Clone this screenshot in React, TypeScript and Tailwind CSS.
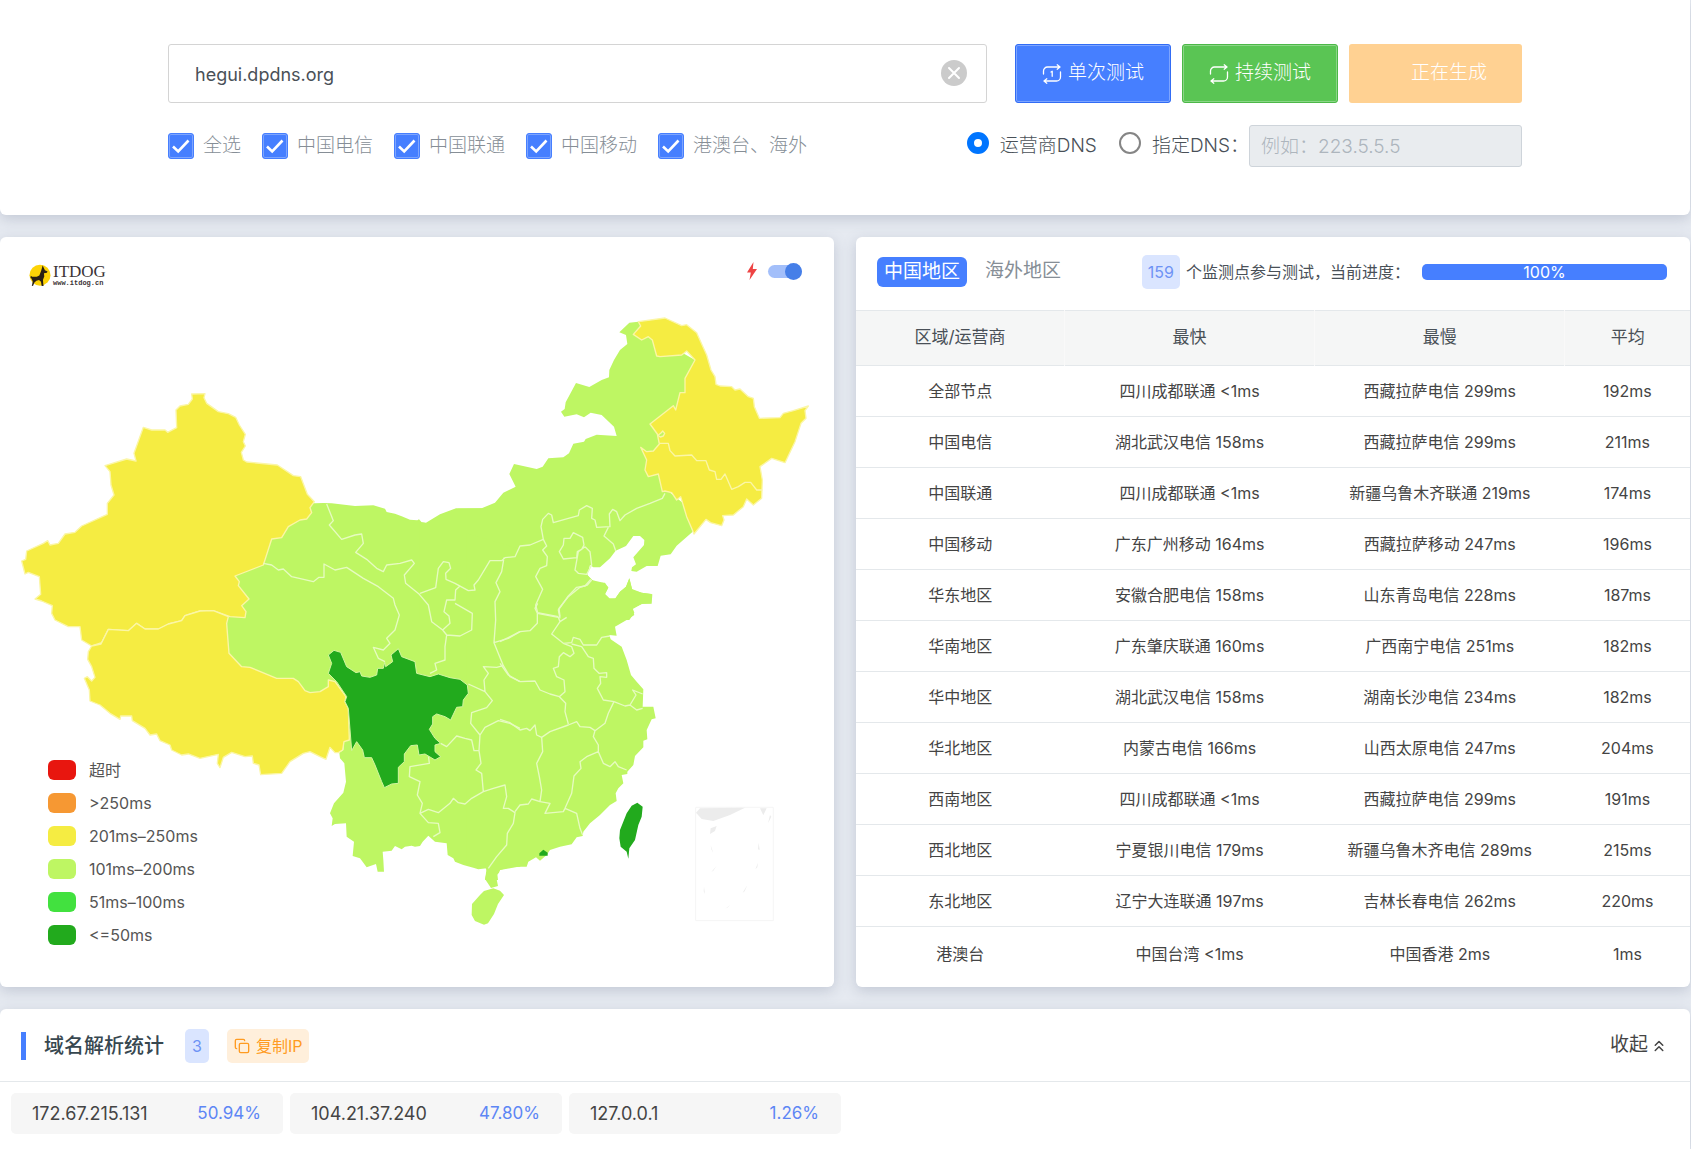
import { useState } from "react";
import { ChevronsUp, Copy } from "lucide-react";

const carriers = ["全选", "中国电信", "中国联通", "中国移动", "港澳台、海外"];

const legend = [
  { label: "超时", color: "bg-[#e8160f]" },
  { label: ">250ms", color: "bg-[#f69833]" },
  { label: "201ms–250ms", color: "bg-[#f5ec42]" },
  { label: "101ms–200ms", color: "bg-[#bef663]" },
  { label: "51ms–100ms", color: "bg-[#42e13f]" },
  { label: "<=50ms", color: "bg-[#22aa1d]" },
];

const rows = [
  ["全部节点", "四川成都联通 <1ms", "西藏拉萨电信 299ms", "192ms"],
  ["中国电信", "湖北武汉电信 158ms", "西藏拉萨电信 299ms", "211ms"],
  ["中国联通", "四川成都联通 <1ms", "新疆乌鲁木齐联通 219ms", "174ms"],
  ["中国移动", "广东广州移动 164ms", "西藏拉萨移动 247ms", "196ms"],
  ["华东地区", "安徽合肥电信 158ms", "山东青岛电信 228ms", "187ms"],
  ["华南地区", "广东肇庆联通 160ms", "广西南宁电信 251ms", "182ms"],
  ["华中地区", "湖北武汉电信 158ms", "湖南长沙电信 234ms", "182ms"],
  ["华北地区", "内蒙古电信 166ms", "山西太原电信 247ms", "204ms"],
  ["西南地区", "四川成都联通 <1ms", "西藏拉萨电信 299ms", "191ms"],
  ["西北地区", "宁夏银川电信 179ms", "新疆乌鲁木齐电信 289ms", "215ms"],
  ["东北地区", "辽宁大连联通 197ms", "吉林长春电信 262ms", "220ms"],
  ["港澳台", "中国台湾 <1ms", "中国香港 2ms", "1ms"],
];

const addresses = [
  { ip: "172.67.215.131", share: "50.94%" },
  { ip: "104.21.37.240", share: "47.80%" },
  { ip: "127.0.0.1", share: "1.26%" },
];

const card = "rounded-md bg-white shadow-[0_4px_14px_rgba(90,105,130,0.25)]";

function RepeatIcon({ once = false }: { once?: boolean }) {
  return (
    <svg viewBox="0 0 20 20" className="size-5" fill="none" stroke="currentColor" strokeWidth="1.3" strokeLinecap="round" strokeLinejoin="round" aria-hidden="true">
      <path d="M1.500 10V7a4 4 0 0 1 4-4h12.500M15.200 .8 18 3 15.200 5.200" />
      <path d="M18.500 8v5a4 4 0 0 1-4 4H2M4.800 14.800 2 17 4.800 19.200" />
      {once && <path d="M9 8l1.200-.7v5" />}
    </svg>
  );
}

function CheckItem({ label }: { label: string }) {
  const [on, setOn] = useState(true);
  return (
    <label className="flex items-center gap-[9px]">
      <span className="relative size-[26px] shrink-0">
        <input
          type="checkbox"
          checked={on}
          onChange={() => setOn(!on)}
          className="peer block size-[26px] appearance-none rounded-[3px] border border-[#467fff] bg-white checked:bg-[#467fff] checked:shadow-[inset_0_0_0_1px_rgba(255,255,255,0.3)]"
        />
        <svg viewBox="0 0 26 26" className="pointer-events-none absolute inset-0 hidden size-[26px] peer-checked:block" fill="none" stroke="#fff" strokeWidth="2.6" aria-hidden="true">
          <path d="M5 13.500l5.200 5L20.500 7.500" />
        </svg>
      </span>
      <span>{label}</span>
    </label>
  );
}

function Logo() {
  return (
    <div className="flex items-center">
      <svg viewBox="0 0 66 70" className="h-[23px] w-[22px]" aria-hidden="true">
        <circle cx="33" cy="34" r="32" fill="#fdd306" />
        <path
          d="M41 4l3 7 4 8 8 4-2 4-9 1 1 10-4 10 1 14 1 5h-6l-2-13-6-5-8 2-6 5-4 10-4 1 3-14-4-9-3-2 1-6 4 3h14l8-4 5-13 3-10z"
          fill="#2a2013"
        />
      </svg>
      <div className="ml-0.5 text-[#3b3436]">
        <div className="font-['Liberation_Serif',serif] text-[17px] leading-[15px]">ITDOG</div>
        <div className="font-['Liberation_Mono',monospace] text-[7px] leading-[8px] font-bold">www.itdog.cn</div>
      </div>
    </div>
  );
}

function ChinaMap() {
  return (
    <svg viewBox="0 237 834 750" className="block w-full" role="img" aria-label="中国地区延迟分布">
      <g transform="translate(0 225) scale(0.333333)" strokeLinejoin="round">
        <g fill="#bef663">
          <path
            transform="translate(660 765)"
            d="M284 70L310 69 335 70 405 78 460 76 495 86 500 96 525 101 545 109 570 119 592 121 597 118 605 127 622 130 640 120 675 103 715 86 790 85 810 78 835 65 850 47 885 25 890 15 960 0V1100L900 1160 870 1162 840 1170 832 1182 834 1200H795L800 1165 775 1168 760 1163 730 1155 705 1145 700 1135 683 1125 680 1090 645 1085 625 1067 608 1085 600 1098 585 1100 575 1097 555 1100 545 1108 525 1098 515 1112 488 1115 490 1140 492 1175H473L468 1152 440 1162 420 1135 398 1128 402 1085 380 1070 378 1030 345 1032 335 1038 338 1015 330 1000 342 970 370 938 378 905 373 850 360 835 358 818 370 810 372 785 380 780 370 700 300 720 0 650-60 410-40 300 20 230 80 130 180 60Z"
          />
          <path
            transform="translate(1260 195)"
            d="M0 697L18 698 60 673 108 655H185L225 638 250 608 287 590 268 552 282 522 350 537 368 530 385 505 430 502 447 490 460 461 492 455 497 447 530 434 590 438 582 410 545 375 512 368 492 382 470 373 433 380 423 365 434 357 437 337 468 279 508 291 545 270 567 262 568 240 582 210 600 180 622 162 618 135 598 127 628 98 655 95 720 150 825 210 800 340 740 400 740 600 790 640 818 725 770 767 752 793 722 797 713 828H680L650 845 634 843 636 832 648 823 640 802 672 765 673 750 660 738H640L618 768 587 782 570 805 540 832H520L510 825 502 855 525 878H555L565 893 555 912 568 925H587L600 905 618 890 628 865 636 897 665 908 695 912 693 940H670L638 955 643 968 628 990H0Z"
          />
          <path
            transform="translate(1500 825)"
            d="M-100 100L240 200 262 225 275 240 310 248 325 262 315 283 330 298 345 296 360 275 378 260 388 235 397 270 425 278 457 283 455 311 425 312 397 328 403 345 385 357 345 380 350 407 328 405 332 418 365 440 380 480 393 525 410 545 430 568 428 620H460L467 655 455 658 440 690 442 718 430 722V742L405 768 400 795 382 815 382 822 365 825 370 850 355 865 347 880 350 903 330 915 300 945 270 970 250 995 248 1008 230 1012 215 1033 180 1040 150 1050 140 1065 120 1082 108 1072 85 1085 80 1100H55L30 1105 0 1110-3 1118-12 1128-6 1158-27 1164-45 1137-39 1113-45 1100-100 1090Z"
          />
          <path
            transform="translate(1500 825)"
            d="M-48 1173L-20 1165 0 1172 12 1185-6 1212-18 1242-36 1270-48 1274-75 1263-85 1245-84 1212-60 1185Z"
          />
        </g>

        <g fill="#f5ec42" stroke="#fbf6a6" strokeWidth="4">
          <path d="M575 507L615 506 612 518 620 535 655 560 685 566 707 577 718 600 736 628 730 650 736 663 724 682 730 705 740 711 832 720 880 752 902 755 922 808 943 830 930 848 935 863 920 882 900 885 865 905 845 938 815 942 790 1020 705 1053 718 1070 715 1082 747 1122 725 1142 738 1160 735 1178 690 1175 640 1157 600 1158 555 1172 545 1187 505 1197 475 1212H435L410 1195 385 1217 325 1213 305 1253 275 1263 245 1245 240 1205H205L165 1185 155 1165 157 1142 125 1128 105 1122 122 1108 118 1055 85 1042 75 1047 65 1008 77 1003 80 978 130 955 143 947 150 960 175 955 195 927 225 922 245 903 322 868V835L342 810 333 780 330 740 315 722 380 702 408 708 402 685 430 607 455 615H495L503 622 530 608 528 555 540 543 565 538 577 522Z" />
          <path
            transform="translate(0 1185)"
            d="M325 28L385 32 410 10 435 27H475L505 12 545 2 555-13 600-27 640-28 685-10 680 10 683 50 687 100 725 140 750 142 830 175H880L895 185 915 212 930 218 960 215 985 200 985 180 1005 185 1038 230 1035 245 1045 265 1048 360 1032 365 1028 390 1015 398H1005L990 382 978 418 960 410 930 395 910 400 870 425 845 460 782 464 777 435 760 430 757 408 735 410 695 397 670 412 660 443 652 430 655 403 600 415 565 402 545 405 515 390 510 375 480 362 470 342 450 345 435 325 397 302 395 288H362L360 298 330 280 300 255 270 243 268 210 253 175 262 170 275 183 285 172 275 140 263 118 265 95 275 78 303 72Z"
          />
          <path
            transform="translate(1260 195)"
            d="M655 95L735 84 785 107 800 104 830 128 842 155 860 195 873 240 885 260 888 283 900 288 935 290 945 300 960 297 985 320 1000 325 1003 350 1018 385 1080 383 1090 370 1120 362 1165 348 1155 362 1158 385 1143 400 1125 455 1095 518 1055 505 1020 530 1027 570 1025 625 1000 645 980 627 970 650 940 675 908 677 912 690 905 707 872 698 858 688 822 732 815 715 800 680 782 620 770 630 755 608 735 603 727 605 715 552 685 560 675 540 680 510 662 472 680 485 700 483 718 462 712 432 690 402 760 347 767 360 780 308H795V265L825 210 800 183 785 195 720 200 710 198 697 150 685 140 665 150 640 133 662 108Z"
          />
          <path
            transform="translate(1260 195)"
            fill="none"
            d="M718 460H745L750 482 765 498 815 495 830 512H858L868 540 885 545 890 568H903L915 552 935 598 955 590 975 577H992L1010 600H1027"
          />
          <path transform="translate(1260 195)" fill="#bef663" d="M714 436L722 430 728 423 734 430 730 438 721 441Z" />
        </g>

        <g fill="none" stroke="#e6fbc0" strokeWidth="4">
          <path
            transform="translate(1260 195)"
            d="M735 610L727 625 690 640 650 655 615 675 600 692 590 665 578 658 568 672 570 710 530 712 525 690 515 685 517 655 500 647 478 660 475 677 445 685 400 698 395 675 385 670 368 688 363 710 370 748 330 765 300 768 285 800 255 803 245 812 210 812 175 870 162 885 165 900 145 902 105 880 78 868 77 850 92 835 87 818 70 815 55 835 47 893 0 910M565 712L552 738 580 762 587 782M370 748L380 768 368 780 382 800 380 827 360 835 347 860 368 898 347 945 353 968M460 728L488 742 492 765 485 778 472 785 470 803 430 807 418 785 430 765 432 745 450 745ZM495 770L510 785 515 825 500 853 475 850 465 840 475 785 495 770M512 868L495 888 470 892 445 918 415 960 420 985M353 968L415 980M252 803L245 845 228 878 240 905 225 935 227 990"
          />
          <path
            transform="translate(660 765)"
            d="M320 72L340 122 328 135 365 178 405 165 425 162 430 190 407 217 440 238 470 265 490 275 500 255 540 250 575 240 583 250 553 285 557 310 598 343 625 375 635 425 668 450 690 430 687 408 672 395 680 360H705L707 330 720 318M705 370L757 400 755 450 720 468 680 465 675 500V540L645 550 650 570 630 580M668 450L680 465M130 250L155 255 175 270 190 267 215 290 280 305 297 292H312V252L345 270 380 262 430 295 475 320 520 355 525 375 538 405 525 450 500 475 510 490 490 510 460 502 475 535 495 545M745 612L795 635 817 662 800 683 755 698 752 730 780 765 795 742 835 722 870 730 900 745M662 790L680 800 710 768 735 775 755 780 762 812H777L780 765M827 420L822 488 850 557 870 590 900 605M850 557L830 562 790 560 805 580 792 600 795 635M822 488L865 475 900 455M625 825L628 850 570 860 568 890 600 905 592 945 607 970 600 1000 625 988 655 998 690 970 700 955 715 968 735 972 755 955 790 935 785 880 768 870 783 850 777 812M600 1000L625 1028 655 1030 660 1058 640 1070M790 935L820 925 855 915 860 950 850 985H865L885 998 880 1030 862 1060 860 1095 830 1130 805 1165"
          />
          <path
            transform="translate(1500 825)"
            d="M60 395L90 392 112 370V340L105 325 113 310M112 340L175 352 180 365 200 352M180 365L155 402 190 430 215 428 220 412 240 418 250 435H290L305 412 330 408M180 350L177 325 205 290 240 262 262 255 275 240M215 432L245 440 265 470 280 475 282 505 297 520 320 518V532L300 530 302 550 292 565 310 600 342 605M190 430L215 440 222 460 210 470 190 458 178 470 175 500 160 505 170 530 192 540 195 575 178 590M60 545L105 543 120 570 150 582 178 590 197 610 195 635 205 672M0 658L30 668 60 690 80 685 90 692 105 675 110 705 125 712 150 695 205 675 230 665 240 680 270 682 285 692M342 605L325 640 315 670 285 692 280 710 295 735V755M342 605L375 618 390 615 410 630 428 625M390 615L408 585 398 570 428 582M295 755L260 770 240 785 243 805 222 828 215 880 195 925M295 755L310 790 330 800 345 785 355 800 380 810M125 712L128 755 110 790 118 830 125 870 120 905M45 935L60 915 85 912 95 897 120 905 150 910 135 940 190 935 195 925 230 940 240 985 248 1005M60 395L0 425M60 545L25 525 0 490"
          />
        </g>

        <g fill="#22aa1d">
          <path
            transform="translate(660 765)"
            stroke="#d2f5a0"
            strokeWidth="3"
            d="M325 525L342 511 362 517 380 560 408 578 420 575 425 588 450 592 470 585 473 565 490 565 494 547 497 560 518 545 513 525 535 506 545 530 585 545 590 580 630 590 655 582 690 593 720 598 742 615 745 640 730 660 728 680 710 682 692 720 675 710 650 702 638 710V732L628 748 645 775 662 790 645 795V815L662 830 645 840 615 822 597 825 592 795 572 797 553 822V845L535 862V910L515 912 493 923 485 905 465 855 455 833H433L428 810 410 785 395 812 385 685 375 665 380 650 350 605 325 580 335 550Z"
          />
          <path
            transform="translate(1500 825)"
            d="M412 908L428 920 425 950 415 975 405 1020 388 1045 385 1076 380 1055 362 1040 358 1015 360 990 380 940 395 917ZM118 1060L130 1049 143 1058V1067H118Z"
          />
        </g>

        <g transform="translate(1500 825)" fill="#ececec">
          <path d="M587 922H820V1262H587Z" fill="none" stroke="#f5f5f5" strokeWidth="3" />
          <path d="M600 925L735 923 690 945 640 963 605 957 588 938ZM780 925H800L790 946ZM632 985L650 978 645 993 630 1002ZM810 945L804 970 814 950ZM776 1028L779 1050 774 1048ZM774 1088L766 1108 772 1102ZM742 1155L728 1178 734 1174ZM632 1035L640 1060 634 1048ZM650 1097L634 1116 640 1112ZM612 1160L615 1182 611 1174ZM690 1215L676 1226 684 1222Z" />
        </g>
      </g>
    </svg>
  );
}

export default function App() {
  const [dns, setDns] = useState("isp");
  const [host, setHost] = useState("hegui.dpdns.org");
  const radio =
    "mb-1.5 size-[22px] appearance-none rounded-full border-2 border-[#858585] bg-white checked:border-[7px] checked:border-[#0075ff]";

  return (
    <div className="flex min-h-screen flex-col gap-[22px] bg-[#e6eaf1] pr-px font-[Inter,'Noto_Sans_CJK_SC',sans-serif] text-[#495057]">
      <section className={`${card} rounded-t-none px-42 pt-11 pb-12`}>
        <form className="flex flex-col gap-[22px]" onSubmit={(e) => e.preventDefault()}>
          <div className="flex items-stretch gap-[11px]">
            <div className="relative mr-[17px] min-w-0 flex-1">
              <input
                type="text"
                aria-label="域名"
                value={host}
                onChange={(e) => setHost(e.target.value)}
                className="h-[59px] w-full rounded-[3px] border border-[#d4d4d4] px-[26px] pt-0.5 text-lg text-[#495057]"
              />
              <button type="button" aria-label="清除" onClick={() => setHost("")} className="absolute top-4 right-5 size-[26px] rounded-full bg-[#cbcbcb]">
                <svg viewBox="0 0 26 26" fill="none" stroke="#fff" strokeWidth="2" strokeLinecap="round" aria-hidden="true">
                  <path d="M8 8l10 10M18 8L8 18" />
                </svg>
              </button>
            </div>
            <button className="flex items-center gap-1.5 rounded-[3px] border border-[#316cf5] bg-[#467fff] px-[26px] text-[19px] font-light text-white shadow-[inset_0_0_0_1px_rgba(255,255,255,0.3)]">
              <RepeatIcon once />
              单次测试
            </button>
            <button className="flex items-center gap-1.5 rounded-[3px] border border-[#4cb848] bg-[#5ac554] px-[26px] text-[19px] font-light text-white shadow-[inset_0_0_0_1px_rgba(255,255,255,0.3)]">
              <RepeatIcon />
              持续测试
            </button>
            <button disabled className="rounded-[3px] bg-[#ffd192] pr-[35px] pl-[62px] text-[19px] font-light text-white">
              正在生成
            </button>
          </div>

          <div className="flex items-center justify-between text-[19px] font-light">
            <div className="flex gap-[21px] text-[#868e96]">
              {carriers.map((c) => (
                <CheckItem key={c} label={c} />
              ))}
            </div>
            <div className="flex items-center">
              <label className="mr-[22px] flex items-center gap-[11px]">
                <input type="radio" name="dns" checked={dns === "isp"} onChange={() => setDns("isp")} className={radio} />
                运营商DNS
              </label>
              <label className="flex items-center gap-[11px]">
                <input type="radio" name="dns" checked={dns === "custom"} onChange={() => setDns("custom")} className={radio} />
                指定DNS：
              </label>
              <input
                type="text"
                aria-label="指定DNS"
                placeholder="例如：223.5.5.5"
                disabled={dns === "isp"}
                className="h-[42px] w-[273px] rounded-[3px] border border-[#ced4da] bg-[#e9ecef] px-[11px] placeholder:text-[#adb5bd]"
              />
            </div>
          </div>
        </form>
      </section>

      <div className="grid grid-cols-2 items-stretch gap-[22px]">
        <section className={`${card} relative`}>
          <ChinaMap />
          <div className="absolute top-[27px] left-[29px]">
            <Logo />
          </div>
          <div className="absolute top-[25px] right-8 flex items-center gap-[11px]">
            <svg viewBox="0 0 10 18" className="h-[18px] w-2.5" fill="#ee4444" aria-hidden="true">
              <path d="M6.500 0L0 10.500h3.800L2.500 18 10 7H5.800Z" />
            </svg>
            <label className="relative block h-[17px] w-[34px]">
              <input type="checkbox" role="switch" aria-label="动态效果" defaultChecked className="peer absolute inset-x-0 top-[2px] block h-[13px] appearance-none rounded-full bg-[#ddd] checked:bg-[#a3bffa]" />
              <span className="pointer-events-none absolute top-0 left-0 size-[17px] rounded-full bg-[#467fe8] peer-checked:right-0 peer-checked:left-auto" />
            </label>
          </div>
          <ul className="absolute bottom-[36px] left-12 text-base text-[#555]">
            {legend.map((l) => (
              <li key={l.label} className="flex h-[33px] items-center gap-[13px]">
                <span className={`h-5 w-7 rounded-md ${l.color}`} />
                {l.label}
              </li>
            ))}
          </ul>
        </section>

        <section className={`${card} overflow-hidden`}>
          <div className="flex h-[73px] items-center pr-[23px] pb-1 pl-[21px]">
            <button className="h-[30px] rounded-md bg-[#467fff] px-[7px] text-[19px] leading-[30px] text-white">中国地区</button>
            <button className="ml-[18px] text-[19px] text-[#868e96]">海外地区</button>
            <span className="ml-auto rounded-[5px] bg-[#dae5ff] px-1.5 text-base leading-[34px] text-[#6e93f5]">159</span>
            <span className="ml-1.5 text-base">个监测点参与测试，当前进度：</span>
            <div role="progressbar" aria-label="当前进度" aria-valuenow={100} className="ml-3 flex h-4 w-[245px] rounded-[5px] bg-[#e9ecef]">
              <div className="flex h-full items-center justify-center rounded-[5px] bg-[#467fff] text-base text-white" style={{ width: "100%" }}>
                100%
              </div>
            </div>
          </div>
          <table className="w-full table-fixed text-center text-base text-[#444]">
            <thead>
              <tr className="h-[55px] border-y border-[#e4e8eb] bg-[#f5f6f6] text-[17px] text-[#495057]">
                <th scope="col" className="w-[25%] border-r border-[#f9f9f9] font-normal">区域/运营商</th>
                <th scope="col" className="w-[30%] border-r border-[#f9f9f9] font-normal">最快</th>
                <th scope="col" className="w-[30%] border-r border-[#f9f9f9] font-normal">最慢</th>
                <th scope="col" className="w-[15%] font-normal">平均</th>
              </tr>
            </thead>
            <tbody>
              {rows.map((r) => (
                <tr key={r[0]} className="h-[51px] border-b border-[#e4e8eb] last:h-[54px] last:border-0">
                  {r.map((cell, i) => (
                    <td key={i}>{cell}</td>
                  ))}
                </tr>
              ))}
            </tbody>
          </table>
        </section>
      </div>

      <section className={`${card} flex-1 rounded-b-none`}>
        <div className="flex h-[73px] items-center border-b border-[#e4e8eb] pt-px pr-[22px] pl-[21px]">
          <span className="h-7 w-[5px] bg-[#467fff]" />
          <h2 className="ml-[18px] text-xl font-medium text-[#37474f]">域名解析统计</h2>
          <span className="ml-[21px] rounded-[5px] bg-[#dae5ff] px-[7px] text-base leading-[34px] text-[#6e93f5]">3</span>
          <button className="ml-[18px] flex h-[34px] items-center gap-1.5 rounded-[5px] bg-[#ffefdb] px-[7px] text-base text-[#ff9b21]">
            <Copy size={16} strokeWidth={2} />
            复制IP
          </button>
          <button className="ml-auto flex items-center gap-0.5 text-[19px] text-[#444]">
            收起
            <ChevronsUp size={18} />
          </button>
        </div>
        <ul className="flex gap-[7px] px-[11px] pt-[11px]">
          {addresses.map((a) => (
            <li key={a.ip} className="flex h-[41px] w-[272px] items-center justify-between rounded-[5px] bg-[#f6f6f6] pr-[22px] pl-[21px]">
              <span className="text-lg text-[#444]">{a.ip}</span>
              <span className="text-[17px] text-[#5d86f5]">{a.share}</span>
            </li>
          ))}
        </ul>
      </section>
    </div>
  );
}
